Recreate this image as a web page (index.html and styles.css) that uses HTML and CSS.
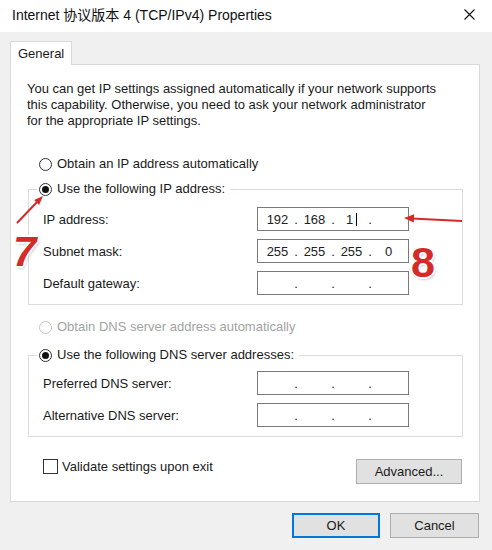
FILE: index.html
```html
<!DOCTYPE html>
<html lang="en">
<head>
  <meta charset="UTF-8">
  <meta name="viewport" content="width=device-width, initial-scale=1">
  <title>Internet 协议版本 4 (TCP/IPv4) Properties</title>
  <link rel="stylesheet" href="styles.css">
</head>
<body>

<div class="window">
  <div class="titlebar">
    <span class="title">Internet 协议版本 4 (TCP/IPv4) Properties</span>
    <svg class="close" width="11" height="11" viewBox="0 0 11 11">
      <path d="M0.5 0.5 L10.5 10.5 M10.5 0.5 L0.5 10.5" stroke="#111" stroke-width="1.1" fill="none"/>
    </svg>
  </div>

  <div class="content">
    <div class="tabs"><div class="tab">General</div></div>

    <div class="panel">
      <p class="desc">You can get IP settings assigned automatically if your network supports<br>this capability. Otherwise, you need to ask your network administrator<br>for the appropriate IP settings.</p>

      <div class="radio"><span class="circle"></span>Obtain an IP address automatically</div>

      <fieldset class="group">
        <legend><div class="radio"><span class="circle on"></span>Use the following IP address:</div></legend>
        <div class="rows">
          <div class="row">
            <span>IP address:</span>
            <div class="ip"><span>192</span><i>.</i><span>168</span><i>.</i><span>1<b class="caret"></b></span><i>.</i><span></span></div>
          </div>
          <div class="row">
            <span>Subnet mask:</span>
            <div class="ip"><span>255</span><i>.</i><span>255</span><i>.</i><span>255</span><i>.</i><span>0</span></div>
          </div>
          <div class="row">
            <span>Default gateway:</span>
            <div class="ip"><span></span><i>.</i><span></span><i>.</i><span></span><i>.</i><span></span></div>
          </div>
        </div>
      </fieldset>

      <div class="radio disabled dns-auto"><span class="circle"></span>Obtain DNS server address automatically</div>

      <fieldset class="group dns">
        <legend><div class="radio"><span class="circle on"></span>Use the following DNS server addresses:</div></legend>
        <div class="rows">
          <div class="row">
            <span>Preferred DNS server:</span>
            <div class="ip"><span></span><i>.</i><span></span><i>.</i><span></span><i>.</i><span></span></div>
          </div>
          <div class="row">
            <span>Alternative DNS server:</span>
            <div class="ip"><span></span><i>.</i><span></span><i>.</i><span></span><i>.</i><span></span></div>
          </div>
        </div>
      </fieldset>

      <div class="panel-foot">
        <div class="check"><span class="box"></span>Validate settings upon exit</div>
        <button class="btn advanced">Advanced...</button>
      </div>
    </div>

    <div class="buttons">
      <button class="btn default">OK</button>
      <button class="btn">Cancel</button>
    </div>
  </div>

  <!-- annotations drawn on top of the screenshot -->
  <svg class="marks" width="492" height="550" viewBox="0 0 492 550">
    <line x1="17" y1="223" x2="37" y2="202" stroke="#d42a2a" stroke-width="2"/>
    <polygon points="43,196 39.1,204.9 34.1,199.9" fill="#d42a2a"/>
    <line x1="412" y1="218.4" x2="462" y2="221" stroke="#d42a2a" stroke-width="2"/>
    <polygon points="404,218 414.2,214.2 413.8,222.6" fill="#d42a2a"/>
  </svg>
  <div class="num seven">7</div>
  <div class="num eight">8</div>
</div>

</body>
</html>
```

FILE: styles.css
```css
* {
  box-sizing: border-box;
}

body {
  margin: 0;
  font-family: "Liberation Sans", Arial, "Noto Sans CJK SC", sans-serif;
  font-size: 13px;
  color: #1a1a1a;
  background: #f0f0f0;
}

.window {
  position: relative;
  width: 492px;
  height: 550px;
  background: #f0f0f0;
  overflow: hidden;
}

.titlebar {
  height: 32px;
  background: #fff;
  display: flex;
  align-items: center;
  justify-content: space-between;
  padding: 0 17px 4px 12px;
}

.title {
  font-size: 14px;
  color: #111;
}

.content {
  padding: 9px 12px 0 10px;
}

.tabs {
  height: 23px;
}

.tab {
  position: relative;
  z-index: 1;
  display: inline-block;
  height: 24px;
  padding: 0 7px;
  line-height: 23px;
  background: #fff;
  border: 1px solid #d9d9d9;
  border-bottom: none;
}

.panel {
  height: 438px;
  background: #fff;
  border: 1px solid #d9d9d9;
  padding: 0 16px;
}

.desc {
  margin: 16px 0 0;
  line-height: 16px;
}

.radio {
  display: flex;
  align-items: center;
  height: 16px;
  line-height: 16px;
  gap: 5px;
  margin-left: 12px;
}

.panel > .radio:first-of-type {
  margin-top: 27px;
}

.circle {
  width: 13px;
  height: 13px;
  border: 1px solid #333;
  border-radius: 50%;
  background: #fff;
  display: flex;
  align-items: center;
  justify-content: center;
}

.circle.on::after {
  content: "";
  width: 7px;
  height: 7px;
  border-radius: 50%;
  background: #111;
}

.radio.disabled {
  color: #a3a3a3;
}

.radio.disabled .circle {
  border-color: #c4c4c4;
}

.dns-auto {
  margin-top: 14px;
}

.group {
  margin: 9px 0 0 1px;
  padding: 0;
  border: 1px solid #dcdcdc;
}

.group.dns {
  margin-top: 12px;
}

.group legend {
  margin-left: 8px;
  padding: 0 5px 0 2px;
}

.group legend .radio {
  margin-left: 0;
}

.rows {
  display: flex;
  flex-direction: column;
  gap: 8px;
  padding: 10px 53px 9px 14px;
}

.dns .rows {
  padding-top: 8px;
}

.row {
  display: flex;
  justify-content: space-between;
  align-items: center;
  height: 24px;
}

.ip {
  width: 152px;
  height: 24px;
  border: 1px solid #7a7a7a;
  background: #fff;
  display: flex;
  align-items: center;
  padding-left: 5px;
  color: #222;
}

.ip span {
  width: 29px;
  text-align: center;
}

.ip i {
  width: 8px;
  font-style: normal;
  text-align: center;
}

.caret {
  display: inline-block;
  width: 1px;
  height: 13px;
  margin-left: 3px;
  background: #000;
  vertical-align: -2px;
}

.panel-foot {
  display: flex;
  justify-content: space-between;
  align-items: flex-start;
  margin-top: 21px;
}

.check {
  display: flex;
  align-items: center;
  gap: 4px;
  height: 16px;
  margin-left: 16px;
}

.box {
  width: 15px;
  height: 15px;
  border: 1px solid #333;
  background: #fff;
}

.btn {
  font-family: inherit;
  font-size: 13px;
  color: #1a1a1a;
  height: 25px;
  background: #e1e1e1;
  border: 1px solid #adadad;
  padding: 0;
}

.advanced {
  width: 106px;
  margin: 1px 1px 0 0;
}

.buttons {
  display: flex;
  justify-content: flex-end;
  gap: 10px;
  margin: 11px 1px 0 0;
}

.buttons .btn {
  width: 89px;
}

.btn.default {
  width: 88px;
  border-color: #0078d7;
  box-shadow: inset 0 0 0 1px #0078d7;
}

/* red annotation marks */
.marks {
  position: absolute;
  top: 0;
  left: 0;
  pointer-events: none;
}

.num {
  position: absolute;
  font-family: "Liberation Sans", Arial, sans-serif;
  font-weight: bold;
  line-height: 1;
  color: #d42a2a;
  text-shadow: 1px 1px 0 #fff, -1px -1px 0 #fff, 1px -1px 0 #fff, -1px 1px 0 #fff,
    2px 0 0 #fff, -2px 0 0 #fff, 0 2px 0 #fff, 0 -2px 0 #fff, 1px 2px 3px rgba(0,0,0,0.35);
}

.seven {
  font-size: 42px;
  font-style: italic;
  left: 13px;
  top: 231px;
}

.eight {
  font-size: 43px;
  left: 411px;
  top: 241px;
}
```
